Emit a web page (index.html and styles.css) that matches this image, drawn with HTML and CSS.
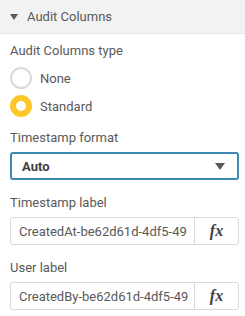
FILE: index.html
```html
<!DOCTYPE html>
<html lang="en">
<head>
<meta charset="UTF-8">
<title>Audit Columns</title>
<link rel="stylesheet" href="styles.css">
</head>
<body>
<div class="panel">
    <div class="head">
        <span class="caret"></span>
        <span class="head-title">Audit Columns</span>
    </div>
    <div class="body">
        <div class="field">
            <div class="label">Audit Columns type</div>
            <label class="radio">
                <span class="dot"></span>
                <span>None</span>
            </label>
            <label class="radio on">
                <span class="dot"></span>
                <span>Standard</span>
            </label>
        </div>
        <div class="field">
            <div class="label">Timestamp format</div>
            <div class="select">
                <span>Auto</span>
                <span class="select-caret"></span>
            </div>
        </div>
        <div class="field">
            <div class="label">Timestamp label</div>
            <div class="input">
                <span class="input-text">CreatedAt-be62d61d-4df5-49</span>
                <span class="fx">fx</span>
            </div>
        </div>
        <div class="field">
            <div class="label">User label</div>
            <div class="input">
                <span class="input-text">CreatedBy-be62d61d-4df5-49</span>
                <span class="fx">fx</span>
            </div>
        </div>
    </div>
</div>
</body>
</html>
```

FILE: styles.css
```css
*{
    margin:0;
    padding:0;
    box-sizing:border-box;
}
body{
    width:245px;
    height:316px;
    background:#fff;
    font-family:Roboto,"Liberation Sans",sans-serif;
    font-size:13px;
    color:#595959;
    overflow:hidden;
}
.head{
    height:34px;
    background:#f2f2f2;
    border-bottom:1px solid #e6e6e6;
    display:flex;
    align-items:center;
    padding-left:10px;
}
.caret{
    width:0;
    height:0;
    border-left:4px solid transparent;
    border-right:4px solid transparent;
    border-top:6px solid #595959;
    margin-right:9px;
}
.head-title{
    font-size:13px;
    color:#595959;
}
.body{
    padding:8px 6px 0 10px;
}
.field{
    margin-bottom:14px;
}
.field:first-child{
    margin-bottom:10px;
}
.label{
    height:18px;
    line-height:18px;
    margin-bottom:5px;
}
.radio{
    display:flex;
    align-items:center;
    height:26px;
    margin-bottom:2px;
}
.dot{
    width:22px;
    height:22px;
    border-radius:50%;
    border:2px solid #d9d9d9;
    margin-right:8px;
}
.radio.on .dot{
    border:6px solid #ffc629;
}
.select{
    height:28px;
    border:2px solid #3f8ab3;
    border-radius:3px;
    display:flex;
    align-items:center;
    justify-content:space-between;
    padding:0 12px 0 10px;
    font-weight:bold;
    color:#404040;
}
.select-caret{
    width:0;
    height:0;
    border-left:5px solid transparent;
    border-right:5px solid transparent;
    border-top:7px solid #595959;
}
.input{
    height:28px;
    border:1px solid #d9d9d9;
    border-radius:3px;
    display:flex;
    align-items:center;
}
.input-text{
    flex:1;
    min-width:0;
    overflow:hidden;
    white-space:nowrap;
    padding-left:8px;
    color:#595959;
}
.fx{
    width:44px;
    height:100%;
    border-left:1px solid #d9d9d9;
    display:flex;
    align-items:center;
    justify-content:center;
    font-family:"Liberation Serif",serif;
    font-style:italic;
    font-weight:bold;
    font-size:16px;
    color:#404040;
}
```
